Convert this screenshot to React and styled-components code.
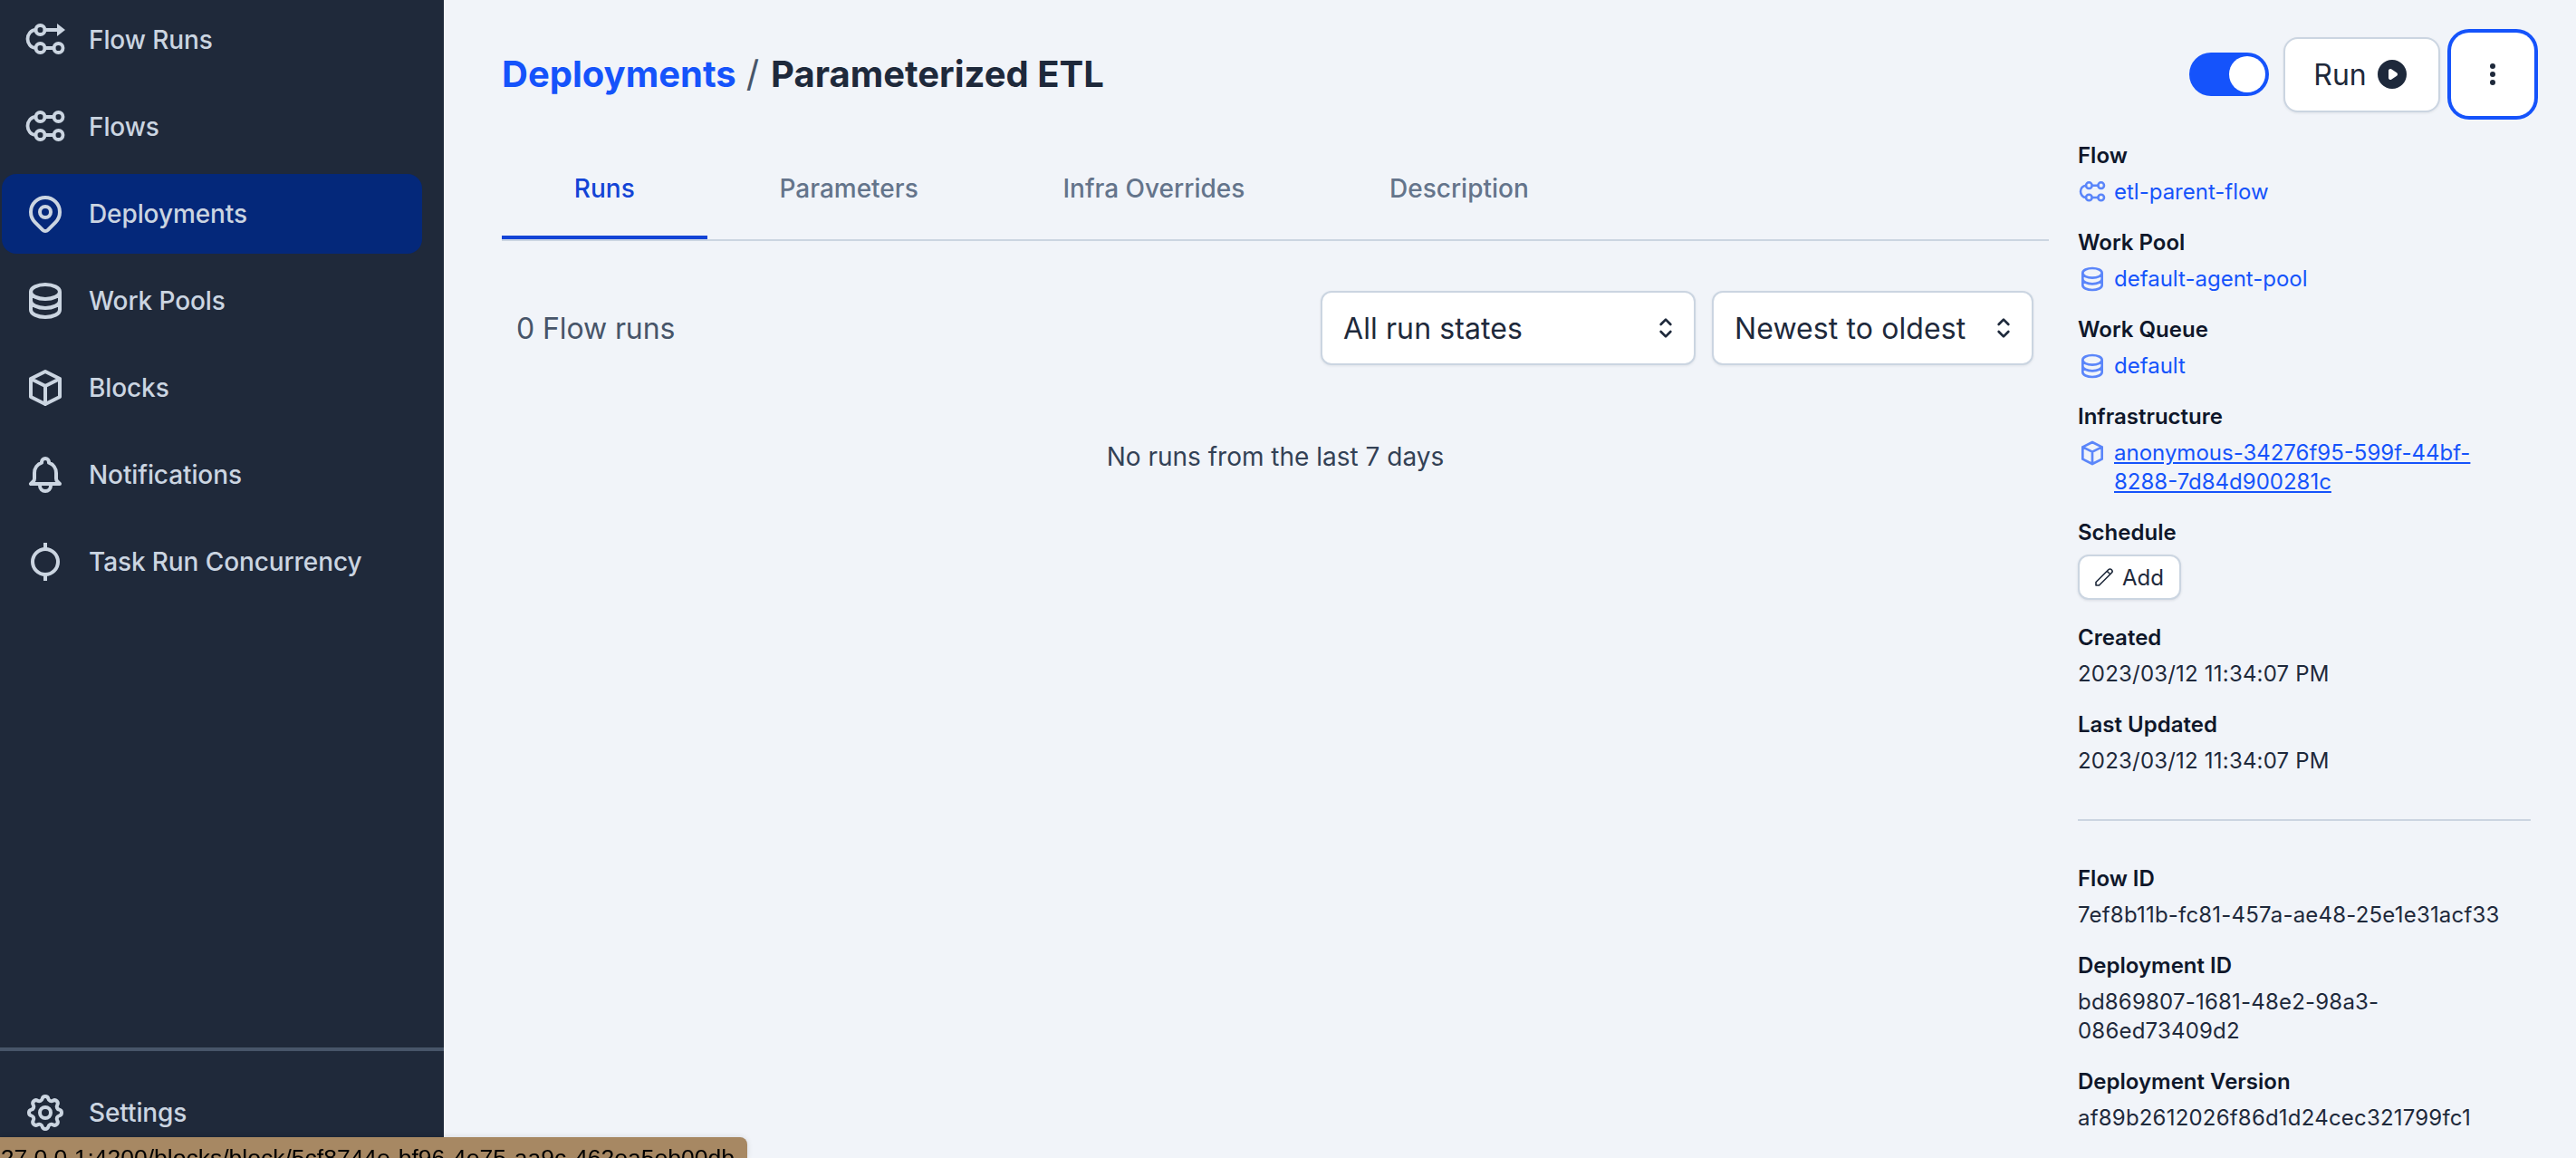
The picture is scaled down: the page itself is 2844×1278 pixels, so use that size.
import React from "react";
import styled, { createGlobalStyle } from "styled-components";

const PRIMARY = "#1553fb";

const Global = createGlobalStyle`
  html, body { margin: 0; padding: 0; height: 100%; overflow: hidden; }
  body { font-family: Inter, "Liberation Sans", sans-serif; background: #f1f4f9; color: #1e293b; }
  * { box-sizing: border-box; }
`;

const Page = styled.div`
  display: flex;
  height: 100vh;
  overflow: hidden;
`;

const Sidebar = styled.aside`
  flex: 0 0 490px;
  display: flex;
  flex-direction: column;
  background: #1f293a;
`;

const NavList = styled.nav`
  flex: 1;
  display: flex;
  flex-direction: column;
  gap: 8px;
  padding: 0 24px 0 2px;
`;

const NavRow = styled.a`
  display: flex;
  align-items: center;
  gap: 24px;
  height: 88px;
  padding-left: 24px;
  border-radius: 16px;
  color: #cbd5e1;
  font-size: 28px;
  font-weight: 500;
  letter-spacing: -0.1px;
  background: ${(p) => (p.$active ? "#04287a" : "transparent")};
`;

const NavFooter = styled.div`
  flex: 0 0 122px;
  padding: 24px 24px 0 2px;
  border-top: 4px solid #475569;
`;

const Main = styled.main`
  flex: 1;
  min-width: 0;
  padding: 40px 50px 0 64px;
`;

const Header = styled.header`
  display: flex;
  align-items: center;
  justify-content: space-between;
  height: 84px;
`;

const Crumbs = styled.h1`
  margin: 0;
  font-size: 40px;
  font-weight: 700;
  line-height: 48px;
  color: #1e293b;
`;

const CrumbLink = styled.a`
  color: ${PRIMARY};
`;

const CrumbSep = styled.span`
  color: #475569;
  font-weight: 400;
  margin: 0 13px 0 11px;
`;

const Actions = styled.div`
  display: flex;
  align-items: center;
  gap: 16px;
`;

const Toggle = styled.div`
  width: 88px;
  height: 48px;
  padding: 4px;
  border-radius: 24px;
  background: ${PRIMARY};
  display: flex;
  justify-content: flex-end;
`;

const Knob = styled.span`
  width: 40px;
  height: 40px;
  border-radius: 50%;
  background: #fff;
`;

const Button = styled.button`
  display: flex;
  align-items: center;
  justify-content: center;
  gap: 8px;
  height: ${(p) => (p.$focused ? 84 : 83)}px;
  width: ${(p) => p.$width}px;
  padding: 0;
  font: 400 32px Inter, sans-serif;
  color: #1e293b;
  background: #fff;
  border-radius: 16px;
  border: ${(p) => (p.$focused ? "none" : "2px solid #cbd5e1")};
  box-shadow: ${(p) =>
    p.$focused
      ? `0 0 0 4px #fff, 0 0 0 8px ${PRIMARY}`
      : "0 1px 3px rgba(15, 23, 42, 0.08)"};
`;

const Body = styled.div`
  display: flex;
  align-items: flex-start;
  gap: 32px;
  margin-top: 30px;
`;

const Content = styled.section`
  flex: 1;
  min-width: 0;
  padding-top: 22px;
`;

const TabList = styled.div`
  display: flex;
  border-bottom: 2px solid #cbd5e1;
`;

const Tab = styled.div`
  height: 88px;
  padding: 0 79.85px 20px;
  display: flex;
  align-items: center;
  font-size: 28px;
  font-weight: 500;
  color: ${(p) => (p.$active ? "#1344d6" : "#64748b")};
  border-bottom: 4px solid ${(p) => (p.$active ? "#1344d6" : "transparent")};
`;

const Toolbar = styled.div`
  display: flex;
  align-items: center;
  margin-top: 55px;
  padding: 0 17px 0 16px;
`;

const RunCount = styled.div`
  flex: 1;
  font-size: 32px;
  letter-spacing: -0.1px;
  color: #475569;
`;

const Selects = styled.div`
  display: flex;
  gap: 18px;
`;

const Select = styled.div`
  width: ${(p) => p.$width}px;
  height: 82px;
  display: flex;
  align-items: center;
  justify-content: space-between;
  padding: 0 15px 0 23px;
  font-size: 32px;
  letter-spacing: 0.1px;
  color: #1e293b;
  background: #fff;
  border: 2px solid #cbd5e1;
  border-radius: 12px;
  box-shadow: 0 1px 3px rgba(15, 23, 42, 0.08);
`;

const EmptyNote = styled.p`
  margin: 81px 0 0;
  text-align: center;
  font-size: 28px;
  line-height: 40px;
  color: #334155;
`;

const Details = styled.aside`
  flex: 0 0 500px;
  padding-top: 2px;
  font-size: 24px;
  line-height: 32px;
`;

const Item = styled.div`
  margin-bottom: 24px;
`;

const ScheduleItem = styled(Item)`
  margin-bottom: 26px;
`;

const Label = styled.div`
  font-weight: 600;
  color: #0f172a;
  margin-bottom: 8px;
`;

const Value = styled.div`
  color: #1e293b;
  letter-spacing: 0.2px;
  overflow-wrap: anywhere;
`;

const LinkValue = styled.div`
  display: flex;
  align-items: flex-start;
  gap: 8px;
  color: ${PRIMARY};
  svg { flex: none; opacity: 0.68; }
`;

const LinkText = styled.a`
  text-decoration: ${(p) => (p.$underline ? "underline" : "none")};
`;

const AddButton = styled.button`
  display: flex;
  align-items: center;
  gap: 8px;
  height: 50px;
  width: 114px;
  padding: 0 0 0 15px;
  font: 400 24px Inter, sans-serif;
  color: #1e293b;
  background: #fff;
  border: 2px solid #cbd5e1;
  border-radius: 12px;
  box-shadow: 0 1px 3px rgba(15, 23, 42, 0.1);
`;

const Rule = styled.hr`
  height: 2px;
  margin: 48px 0 48px;
  border: none;
  background: #cbd5e1;
`;

const StatusBubble = styled.div`
  position: fixed;
  left: 0;
  bottom: 0;
  width: 825px;
  height: 23px;
  padding: 8px 14px 0 0;
  display: flex;
  justify-content: flex-end;
  overflow: hidden;
  white-space: nowrap;
  font: 26.500px/30px "Liberation Sans", Arial, sans-serif;
  color: #000;
  background: #a78863;
  border-top-right-radius: 8px;
  box-shadow: 0 0 6px rgba(0, 0, 0, 0.12);
`;

const Svg = ({ size = 48, width = 2, children, fill = "none", view = 24 }) => (
  <svg
    width={size}
    height={size}
    viewBox={`0 0 ${view} ${view}`}
    fill={fill}
    stroke={fill === "none" ? "currentColor" : "none"}
    strokeWidth={width}
    strokeLinecap="round"
    strokeLinejoin="round"
    style={{ flex: "none" }}
  >
    {children}
  </svg>
);

const FlowRunIcon = ({ size = 48 }) => (
  <Svg size={size} view={48} width={3.8}>
    <circle cx="18.5" cy="13" r="5" />
    <circle cx="18.5" cy="33" r="5" />
    <circle cx="38.5" cy="33" r="5" />
    <path d="M23.5 33h10M23.5 13H39" />
    <path d="M13.5 13C8 13 4.5 18 4.5 23s3.500 10 9 10" />
    <path d="M37 6l9 7-9 7z" fill="currentColor" stroke="none" />
  </Svg>
);

const FlowIcon = ({ size = 48 }) => (
  <Svg size={size} view={48} width={3.8}>
    <circle cx="18.500" cy="13" r="5" />
    <circle cx="38.500" cy="13" r="5" />
    <circle cx="18.500" cy="33" r="5" />
    <circle cx="38.500" cy="33" r="5" />
    <path d="M23.500 13h10M23.500 33h10" />
    <path d="M13.500 13C8 13 4.500 18 4.500 23s3.500 10 9 10" />
  </Svg>
);

const PinIcon = () => (
  <Svg>
    <path d="M17.657 16.657L13.414 20.9a1.998 1.998 0 01-2.827 0l-4.244-4.243a8 8 0 1111.314 0z" />
    <path d="M15 11a3 3 0 11-6 0 3 3 0 016 0z" />
  </Svg>
);

const DatabaseIcon = ({ size = 48 }) => (
  <Svg size={size}>
    <path d="M4 7v10c0 2.21 3.582 4 8 4s8-1.79 8-4V7M4 7c0 2.21 3.582 4 8 4s8-1.79 8-4M4 7c0-2.21 3.582-4 8-4s8 1.79 8 4m0 5c0 2.21-3.582 4-8 4s-8-1.79-8-4" />
  </Svg>
);

const CubeIcon = ({ size = 48 }) => (
  <Svg size={size}>
    <path d="M20 7l-8-4-8 4m16 0l-8 4m8-4v10l-8 4m0-10L4 7m8 4v10M4 7v10l8 4" />
  </Svg>
);

const BellIcon = () => (
  <Svg>
    <path d="M15 17h5l-1.405-1.405A2.032 2.032 0 0118 14.158V11a6.002 6.002 0 00-4-5.659V5a2 2 0 10-4 0v.341C7.67 6.165 6 8.388 6 11v3.159c0 .538-.214 1.055-.595 1.436L4 17h5m6 0v1a3 3 0 11-6 0v-1m6 0H9" />
  </Svg>
);

const ConcurrencyIcon = () => (
  <Svg>
    <circle cx="12" cy="12" r="7" />
    <path d="M12 1.500V5M12 19v3.500" strokeLinecap="butt" />
  </Svg>
);

const CogIcon = () => (
  <Svg>
    <path d="M10.325 4.317c.426-1.756 2.924-1.756 3.35 0a1.724 1.724 0 002.573 1.066c1.543-.94 3.31.826 2.37 2.37a1.724 1.724 0 001.065 2.572c1.756.426 1.756 2.924 0 3.35a1.724 1.724 0 00-1.066 2.573c.94 1.543-.826 3.31-2.37 2.37a1.724 1.724 0 00-2.572 1.065c-.426 1.756-2.924 1.756-3.35 0a1.724 1.724 0 00-2.573-1.066c-1.543.94-3.31-.826-2.37-2.37a1.724 1.724 0 00-1.065-2.572c-1.756-.426-1.756-2.924 0-3.35a1.724 1.724 0 001.066-2.573c-.94-1.543.826-3.31 2.37-2.37.996.608 2.296.07 2.572-1.065z" />
    <path d="M15 12a3 3 0 11-6 0 3 3 0 016 0z" />
  </Svg>
);

const PlayIcon = () => (
  <svg width="40" height="40" viewBox="0 0 20 20" fill="currentColor" style={{ flex: "none" }}>
    <path
      fillRule="evenodd"
      clipRule="evenodd"
      d="M10 18a8 8 0 100-16 8 8 0 000 16zM9.555 7.168A1 1 0 008 8v4a1 1 0 001.555.832l3-2a1 1 0 000-1.664l-3-2z"
    />
  </svg>
);

const DotsIcon = () => (
  <svg width="40" height="40" viewBox="0 0 40 40" fill="currentColor">
    <circle cx="20" cy="11" r="3" />
    <circle cx="20" cy="20" r="3" />
    <circle cx="20" cy="29" r="3" />
  </svg>
);

const SelectorIcon = () => (
  <Svg size={32}>
    <path d="M8 9l4-4 4 4m0 6l-4 4-4-4" />
  </Svg>
);

const PencilIcon = () => (
  <Svg size={24} width={1.6}>
    <path d="M15.232 5.232l3.536 3.536m-2.036-5.036a2.5 2.5 0 113.536 3.536L6.5 21.036H3v-3.572L16.732 3.732z" />
  </Svg>
);

const navItems = [
  { label: "Flow Runs", icon: <FlowRunIcon /> },
  { label: "Flows", icon: <FlowIcon /> },
  { label: "Deployments", icon: <PinIcon />, active: true },
  { label: "Work Pools", icon: <DatabaseIcon /> },
  { label: "Blocks", icon: <CubeIcon /> },
  { label: "Notifications", icon: <BellIcon /> },
  { label: "Task Run Concurrency", icon: <ConcurrencyIcon /> },
];

const tabs = ["Runs", "Parameters", "Infra Overrides", "Description"];

const LinkItem = ({ label, icon, text, underline }) => (
  <Item>
    <Label>{label}</Label>
    <LinkValue>
      {icon}
      <LinkText $underline={underline}>{text}</LinkText>
    </LinkValue>
  </Item>
);

const TextItem = ({ label, text }) => (
  <Item>
    <Label>{label}</Label>
    <Value>{text}</Value>
  </Item>
);

export default function App() {
  return (
    <>
      <Global />
      <Page>
        <Sidebar>
          <NavList>
            {navItems.map((n) => (
              <NavRow key={n.label} $active={n.active}>
                {n.icon}
                {n.label}
              </NavRow>
            ))}
          </NavList>
          <NavFooter>
            <NavRow>
              <CogIcon />
              Settings
            </NavRow>
          </NavFooter>
        </Sidebar>
        <Main>
          <Header>
            <Crumbs>
              <CrumbLink>Deployments</CrumbLink>
              <CrumbSep>/</CrumbSep>
              Parameterized ETL
            </Crumbs>
            <Actions>
              <Toggle>
                <Knob />
              </Toggle>
              <Button $width={173}>
                Run
                <PlayIcon />
              </Button>
              <Button $width={84} $focused>
                <DotsIcon />
              </Button>
            </Actions>
          </Header>
          <Body>
            <Content>
              <TabList>
                {tabs.map((t, i) => (
                  <Tab key={t} $active={i === 0}>
                    {t}
                  </Tab>
                ))}
              </TabList>
              <Toolbar>
                <RunCount>0 Flow runs</RunCount>
                <Selects>
                  <Select $width={414}>
                    All run states
                    <SelectorIcon />
                  </Select>
                  <Select $width={355}>
                    Newest to oldest
                    <SelectorIcon />
                  </Select>
                </Selects>
              </Toolbar>
              <EmptyNote>No runs from the last 7 days</EmptyNote>
            </Content>
            <Details>
              <LinkItem label="Flow" icon={<FlowIcon size={32} />} text="etl-parent-flow" />
              <LinkItem label="Work Pool" icon={<DatabaseIcon size={32} />} text="default-agent-pool" />
              <LinkItem label="Work Queue" icon={<DatabaseIcon size={32} />} text="default" />
              <LinkItem
                label="Infrastructure"
                icon={<CubeIcon size={32} />}
                text="anonymous-34276f95-599f-44bf-8288-7d84d900281c"
                underline
              />
              <ScheduleItem>
                <Label>Schedule</Label>
                <AddButton>
                  <PencilIcon />
                  Add
                </AddButton>
              </ScheduleItem>
              <TextItem label="Created" text="2023/03/12 11:34:07 PM" />
              <TextItem label="Last Updated" text="2023/03/12 11:34:07 PM" />
              <Rule />
              <TextItem label="Flow ID" text="7ef8b11b-fc81-457a-ae48-25e1e31acf33" />
              <TextItem label="Deployment ID" text="bd869807-1681-48e2-98a3-086ed73409d2" />
              <TextItem label="Deployment Version" text="af89b2612026f86d1d24cec321799fc1" />
            </Details>
          </Body>
        </Main>
      </Page>
      <StatusBubble>127.0.0.1:4200/blocks/block/5cf8744e-bf96-4e75-aa9c-462ea5eb00db</StatusBubble>
    </>
  );
}
